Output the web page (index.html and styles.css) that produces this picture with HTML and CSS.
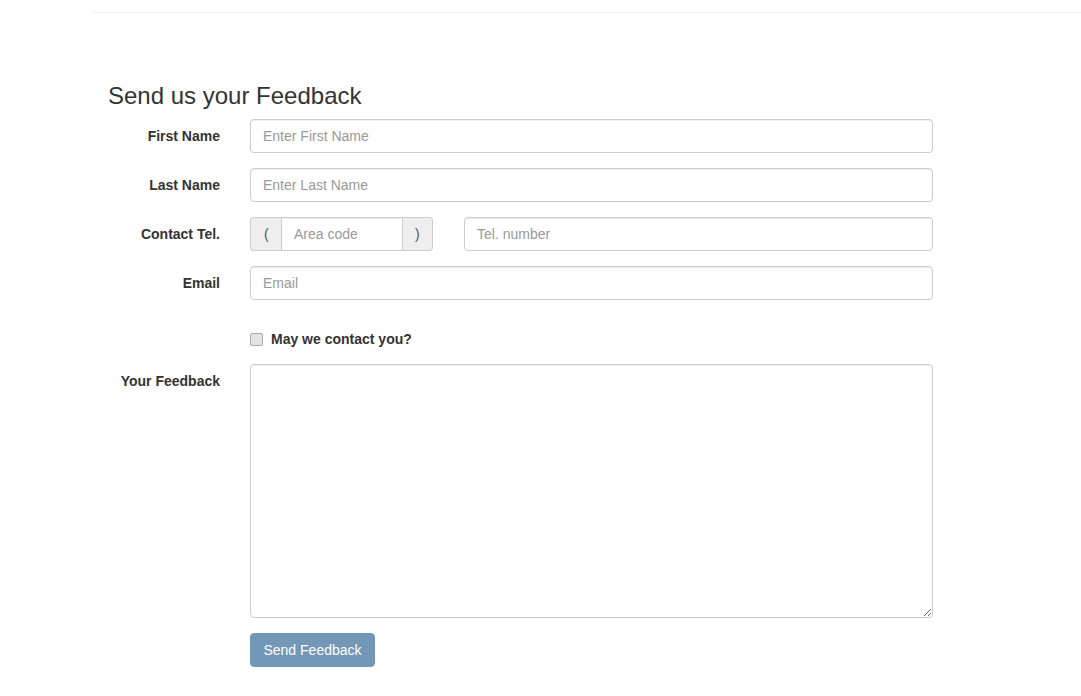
FILE: index.html
```html
<!DOCTYPE html>
<html lang="en">
<head>
<meta charset="utf-8">
<title>Feedback</title>
<link rel="stylesheet" href="styles.css">
</head>
<body>
<div class="topbar"></div>
<div class="page">
  <h3 class="title">Send us your Feedback</h3>
  <form class="form">
    <div class="row">
      <label class="lbl" for="fn">First Name</label>
      <div class="ctl"><input id="fn" class="input" type="text" placeholder="Enter First Name"></div>
    </div>
    <div class="row">
      <label class="lbl" for="ln">Last Name</label>
      <div class="ctl"><input id="ln" class="input" type="text" placeholder="Enter Last Name"></div>
    </div>
    <div class="row">
      <label class="lbl" for="ac">Contact Tel.</label>
      <div class="ctl tel">
        <div class="group">
          <span class="addon addon-l">(</span>
          <input id="ac" class="input mid" type="text" placeholder="Area code">
          <span class="addon addon-r">)</span>
        </div>
        <input class="input telnum" type="text" placeholder="Tel. number">
      </div>
    </div>
    <div class="row">
      <label class="lbl" for="em">Email</label>
      <div class="ctl"><input id="em" class="input" type="email" placeholder="Email"></div>
    </div>
    <div class="row check-row">
      <div class="lbl-empty"></div>
      <label class="check"><input type="checkbox" class="cb" disabled><span>May we contact you?</span></label>
    </div>
    <div class="row">
      <label class="lbl" for="fb">Your Feedback</label>
      <div class="ctl"><textarea id="fb" class="input area"></textarea></div>
    </div>
    <div class="row">
      <div class="lbl-empty"></div>
      <button type="button" class="btn" disabled>Send Feedback</button>
    </div>
  </form>
</div>
</body>
</html>
```
FILE: styles.css
```css
* { box-sizing: border-box; }
html, body { margin: 0; padding: 0; background: #fff; }
body {
  font-family: "Liberation Sans", Arial, Helvetica, sans-serif;
  font-size: 14px;
  line-height: 20px;
  color: #333;
}
.topbar {
  height: 13px;
  margin-left: 93px;
  border-bottom: 1px solid #eee;
}
.page {
  padding-left: 108px;
  padding-top: 70px;
}
.title {
  margin: 0 0 10px 0;
  font-size: 24px;
  font-weight: 400;
  line-height: 26.4px;
  color: #333;
}
.form { display: flex; flex-direction: column; gap: 15px; }
.row { display: flex; align-items: flex-start; gap: 30px; }
.lbl {
  width: 113px;
  flex: none;
  text-align: right;
  font-weight: 700;
  padding-top: 7px;
}
.lbl-empty { width: 113px; flex: none; }
.row { margin-left: -1px; }
.ctl { width: 683px; flex: none; }
.input {
  display: block;
  width: 100%;
  height: 34px;
  padding: 6px 12px;
  font-family: inherit;
  font-size: 14px;
  line-height: 20px;
  color: #555;
  background: #fff;
  border: 1px solid #ccc;
  border-radius: 4px;
  box-shadow: inset 0 1px 1px rgba(0,0,0,.075);
  outline: none;
}
.input::placeholder { color: #999; }
.tel { display: flex; gap: 31px; }
.group { display: flex; width: 183px; flex: none; }
.addon {
  height: 34px;
  padding: 6px 12px;
  background: #eee;
  border: 1px solid #ccc;
  color: #555;
  font-size: 14px;
  line-height: 20px;
  flex: none;
}
.addon-l { width: 31px; padding: 6px 0 6px 13px; border-right: 0; border-radius: 4px 0 0 4px; }
.addon-r { width: 30px; padding: 6px 0 6px 12px; border-left: 0; border-radius: 0 4px 4px 0; }
.mid { width: 122px; flex: none; border-radius: 0; }
.telnum { flex: 1; width: auto; }
.check-row { margin-top: 14px; }
.check {
  display: flex;
  align-items: center;
  gap: 8px;
  font-weight: 700;
  line-height: 20px;
}
.cb {
  -webkit-appearance: none;
  appearance: none;
  margin: 0;
  width: 13px;
  height: 13px;
  border: 1px solid #a9a9a9;
  border-radius: 2px;
  background: #e3e3e3;
}
.area { height: 254px; resize: vertical; }
.btn {
  height: 34px;
  width: 125px;
  padding: 6px 12px;
  font-family: inherit;
  font-size: 14px;
  line-height: 20px;
  color: #fff;
  background: rgb(115,151,183);
  border: 1px solid rgb(115,151,183);
  border-radius: 4px;
  cursor: not-allowed;
}
```
